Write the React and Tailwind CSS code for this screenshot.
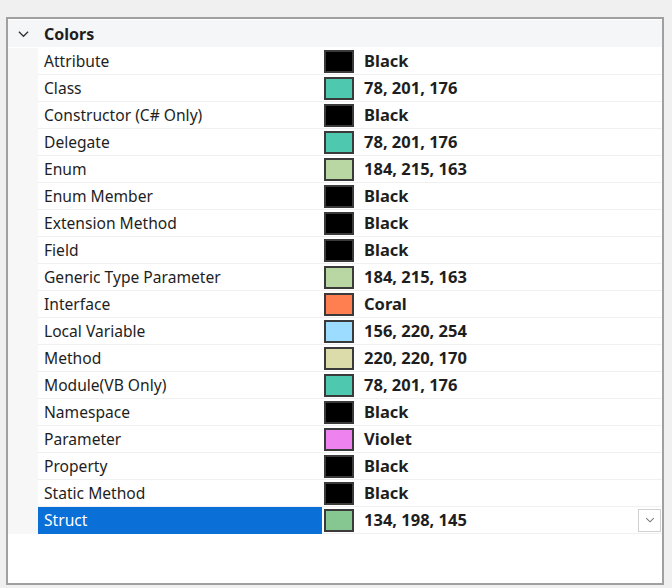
import React from "react";

const rows = [
  { name: "Attribute", color: "#000000", value: "Black" },
  { name: "Class", color: "#4ec9b0", value: "78, 201, 176" },
  { name: "Constructor (C# Only)", color: "#000000", value: "Black" },
  { name: "Delegate", color: "#4ec9b0", value: "78, 201, 176" },
  { name: "Enum", color: "#b8d7a3", value: "184, 215, 163" },
  { name: "Enum Member", color: "#000000", value: "Black" },
  { name: "Extension Method", color: "#000000", value: "Black" },
  { name: "Field", color: "#000000", value: "Black" },
  { name: "Generic Type Parameter", color: "#b8d7a3", value: "184, 215, 163" },
  { name: "Interface", color: "#ff7f50", value: "Coral" },
  { name: "Local Variable", color: "#9cdcfe", value: "156, 220, 254" },
  { name: "Method", color: "#dcdcaa", value: "220, 220, 170" },
  { name: "Module(VB Only)", color: "#4ec9b0", value: "78, 201, 176" },
  { name: "Namespace", color: "#000000", value: "Black" },
  { name: "Parameter", color: "#ee82ee", value: "Violet" },
  { name: "Property", color: "#000000", value: "Black" },
  { name: "Static Method", color: "#000000", value: "Black" },
  { name: "Struct", color: "#86c691", value: "134, 198, 145", selected: true },
];

function Chevron({ className }) {
  return (
    <svg viewBox="0 0 12 8" className={className} fill="none" stroke="currentColor" strokeWidth="1.4">
      <path d="M1 1.5 L6 6.5 L11 1.5" />
    </svg>
  );
}

export default function App() {
  return (
    <div className="w-[672px] h-[588px] bg-[#f0f0f0] pt-[17px] pl-[6px] pr-[8px] pb-[3px]" style={{ fontFamily: '"Noto Sans", "Open Sans", sans-serif' }}>
      <div className="h-full border-2 border-[#a0a0a0] bg-white flex flex-col">
        <div className="h-[27px] flex items-center bg-[#f5f6f8] shrink-0 mt-[1px]">
          <div className="w-[30px] flex justify-center">
            <Chevron className="w-[11px] h-[8px] text-[#333]" />
          </div>
          <span className="text-[16px] font-bold text-[#1e1e1e] pl-[6px]">Colors</span>
        </div>
        <div className="h-[1px] shrink-0" />
        {rows.map((r) => (
          <div key={r.name} className="h-[27px] flex shrink-0">
            <div className="w-[30px] bg-[#f7f7f7]" />
            <div className={`w-[284px] flex items-center pl-[6px] pt-[1px] text-[15.6px] border-b ${r.selected ? "bg-[#0a6fd6] text-white border-[#0a6fd6]" : "text-[#1e1e1e] border-[#f0f0f0]"}`}>
              {r.name}
            </div>
            <div className="flex-1 flex items-center pl-[2px] border-b border-[#f0f0f0]">
              <div className="w-[30px] h-[23px] border-2 border-[#3a3a3a]" style={{ backgroundColor: r.color }} />
              <span className="ml-[10px] text-[16.5px] font-bold text-[#1e1e1e]">{r.value}</span>
              {r.selected && (
                <div className="ml-auto mr-[1px] w-[23px] h-[23px] border border-[#d0d0d0] bg-white flex items-center justify-center">
                  <Chevron className="w-[10px] h-[6px] text-[#777]" />
                </div>
              )}
            </div>
          </div>
        ))}
        <div className="flex-1" />
      </div>
    </div>
  );
}
